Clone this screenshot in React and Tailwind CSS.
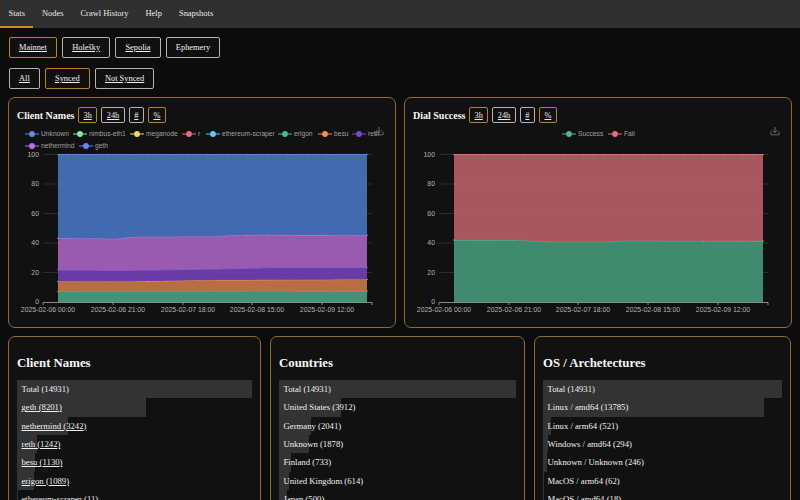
import React from 'react';

const Tab = ({ label, active }) => (
  <div className={`h-7 px-[8.5px] leading-[26px] text-[8.45px] text-[#e8e8e8] ${active ? 'border-b-2 border-[#c98a2c]' : ''}`}>
    {label}
  </div>
);

const Btn = ({ label, active, plain }) => (
  <div
    className={`h-[21px] px-[9px] leading-[19px] text-[8.4px] text-[#f2f2f2] rounded-[2px] border bg-[#101010] ${active ? 'border-[#b98233]' : 'border-[#b4b4b4]'} ${plain ? '' : 'underline'}`}
  >
    {label}
  </div>
);

const SmallBtn = ({ label, active }) => (
  <div
    className={`h-4 px-[4.5px] leading-[15px] text-[8.3px] text-[#ececec] underline rounded-[2px] border ${active ? 'border-[#b98233]' : 'border-[#b4b4b4]'}`}
  >
    {label}
  </div>
);

// piecewise linear lookup over [x, y] stops
const lerp = (stops, x) => {
  for (let i = 0; i < stops.length - 1; i++) {
    const [x0, y0] = stops[i];
    const [x1, y1] = stops[i + 1];
    if (x <= x1) return y0 + ((y1 - y0) * (x - x0)) / (x1 - x0);
  }
  return stops[stops.length - 1][1];
};

const Chart = ({ offsetX, plot, axis, ticks, labels, legend, bands, icon }) => {
  const xs = Array.from({ length: 32 }, (_, i) => plot[0] + ((plot[1] - plot[0]) * i) / 31);
  const ys = [
    ['100', 154.5],
    ['80', 184],
    ['60', 213.5],
    ['40', 243],
    ['20', 272.5],
    ['0', 302],
  ];
  return (
    <svg viewBox={`${offsetX} 125 386 195`} className="block mt-[2px] w-[386px] h-[195px]">
      {legend.map((l) => (
        <g key={l.text}>
          <line x1={l.x} x2={l.x + 14} y1={l.y} y2={l.y} stroke={l.color} strokeWidth="1" />
          <circle cx={l.x + 7} cy={l.y} r="2.9" fill={l.color} />
          <text x={l.x + 16} y={l.y + 2.4} fontSize="6.7" fill="#a0a0a0" fontFamily="Liberation Sans, sans-serif">
            {l.text}
          </text>
        </g>
      ))}
      {ys.map(([t, y]) => (
        <g key={t}>
          {t !== '0' && <line x1={axis[0]} x2={axis[1]} y1={y} y2={y} stroke="#333333" strokeWidth="0.8" />}
          <text x={axis[0] - 4} y={y + 2.4} textAnchor="end" fontSize="6.9" fill="#b4b4b4" fontFamily="Liberation Sans, sans-serif">
            {t}
          </text>
        </g>
      ))}
      {bands.map((b) => {
        const top = xs.map((x) => [x, lerp(b.top, x)]);
        const bottom = xs.map((x) => [x, lerp(b.bottom, x)]).reverse();
        return (
          <g key={b.name}>
            <polygon points={[...top, ...bottom].map((p) => p.join(',')).join(' ')} fill={b.fill} fillOpacity="0.96" />
            <polyline points={top.map((p) => p.join(',')).join(' ')} fill="none" stroke={b.line} strokeWidth="0.9" />
            {top.map(([x, y]) => (
              <circle key={x} cx={x} cy={y} r="0.8" fill={b.line} />
            ))}
          </g>
        );
      })}
      <line x1={axis[0]} x2={axis[1]} y1="302.5" y2="302.5" stroke="#a8a8a8" strokeWidth="0.8" />
      {ticks.map((x) => (
        <line key={x} x1={x} x2={x} y1="302.5" y2="305" stroke="#a8a8a8" strokeWidth="0.8" />
      ))}
      {labels.map(([x, t]) => (
        <text key={t} x={x} y="311.5" textAnchor="middle" fontSize="6.9" fill="#b4b4b4" fontFamily="Liberation Sans, sans-serif">
          {t}
        </text>
      ))}
      <path
        d={`M${icon + 4} 127v5.5m-2.6-2.4l2.6 2.6 2.6-2.6M${icon} 131.5v3.3h8v-3.3`}
        fill="none"
        stroke="#7e7e7e"
        strokeWidth="0.8"
      />
    </svg>
  );
};

const dateLabels = ['2025-02-06 00:00', '2025-02-06 21:00', '2025-02-07 18:00', '2025-02-08 15:00', '2025-02-09 12:00'];

const clientLegend = [
  { x: 25, y: 134, text: 'Unknown', color: '#5b8def' },
  { x: 73, y: 134, text: 'nimbus-eth1', color: '#7ef0a0' },
  { x: 130, y: 134, text: 'meganode', color: '#f5d565' },
  { x: 182, y: 134, text: 'r', color: '#e66b78' },
  { x: 206, y: 134, text: 'ethereum-scraper', color: '#62c8f5' },
  { x: 278, y: 134, text: 'erigon', color: '#4fb58f' },
  { x: 318, y: 134, text: 'besu', color: '#ef9150' },
  { x: 352, y: 134, text: 'reth', color: '#7c45d8' },
  { x: 25, y: 146, text: 'nethermind', color: '#bd6fe6' },
  { x: 79, y: 146, text: 'geth', color: '#5b8def' },
];

const clientBands = [
  {
    name: 'erigon',
    fill: '#44987c',
    line: '#55b893',
    top: [[58, 291.5], [367, 291]],
    bottom: [[58, 302], [367, 302]],
  },
  {
    name: 'besu',
    fill: '#bf7345',
    line: '#ee9a63',
    top: [[58, 281.5], [120, 281.5], [220, 280], [367, 279.5]],
    bottom: [[58, 291.5], [367, 291]],
  },
  {
    name: 'reth',
    fill: '#6c3eae',
    line: '#8a55e0',
    top: [[58, 270], [120, 270.5], [220, 269], [280, 267.5], [367, 267.5]],
    bottom: [[58, 281.5], [120, 281.5], [220, 280], [367, 279.5]],
  },
  {
    name: 'nethermind',
    fill: '#9e5fb6',
    line: '#c57ce8',
    top: [[58, 238.3], [118, 238.7], [135, 236.8], [218, 236.5], [228, 235.5], [255, 234.8], [367, 235.3]],
    bottom: [[58, 270], [120, 270.5], [220, 269], [280, 267.5], [367, 267.5]],
  },
  {
    name: 'geth',
    fill: '#456fb6',
    line: '#5b8def',
    top: [[58, 154.5], [367, 154.5]],
    bottom: [[58, 238.3], [118, 238.7], [135, 236.8], [218, 236.5], [228, 235.5], [255, 234.8], [367, 235.3]],
  },
];

const dialBands = [
  {
    name: 'success',
    fill: '#439175',
    line: '#64b897',
    top: [[454, 240], [515, 240], [550, 241.7], [612, 241.7], [622, 240.7], [763, 241]],
    bottom: [[454, 302], [763, 302]],
  },
  {
    name: 'fail',
    fill: '#b05b62',
    line: '#e56f78',
    top: [[454, 154.5], [763, 154.5]],
    bottom: [[454, 240], [515, 240], [550, 241.7], [612, 241.7], [622, 240.7], [763, 241]],
  },
];

const ChartCard = ({ title, children }) => (
  <div className="w-[388px] h-[231px] rounded-[7px] border border-[#8f6c33] bg-[#111111]">
    <div className="flex items-center h-4 mt-[9px] ml-2">
      <div className="font-bold text-[10px] text-[#f6f6f6] mr-[3.5px]">{title}</div>
      <div className="flex gap-1">
        <SmallBtn label="3h" active />
        <SmallBtn label="24h" />
        <SmallBtn label="#" />
        <SmallBtn label="%" active />
      </div>
    </div>
    {children}
  </div>
);

const StatCard = ({ title, total, rows, width, linked }) => (
  <div className={`h-[220px] px-2 rounded-[7px] border border-[#8f6c33] bg-[#111111] ${width}`}>
    <h2 className="mt-[18px] mb-[9px] h-4 leading-4 font-bold text-[12.8px] text-[#f8f8f8]">{title}</h2>
    {rows.map(([name, count]) => (
      <div key={name} className="relative h-[18.33px]">
        <div className="absolute inset-y-0 left-0 bg-[#333333]" style={{ width: `${(count / total) * 100}%` }} />
        <div className={`relative pl-[4.5px] leading-[18px] text-[8.7px] text-[#f0f0f0] ${linked && name !== 'Total' ? 'underline' : ''}`}>
          {name} ({count})
        </div>
      </div>
    ))}
  </div>
);

const clientRows = [
  ['Total', 14931],
  ['geth', 8201],
  ['nethermind', 3242],
  ['reth', 1242],
  ['besu', 1130],
  ['erigon', 1089],
  ['ethereum-scraper', 11],
];

const countryRows = [
  ['Total', 14931],
  ['United States', 3912],
  ['Germany', 2041],
  ['Unknown', 1878],
  ['Finland', 733],
  ['United Kingdom', 614],
  ['Japan', 500],
];

const osRows = [
  ['Total', 14931],
  ['Linux / amd64', 13785],
  ['Linux / arm64', 521],
  ['Windows / amd64', 294],
  ['Unknown / Unknown', 246],
  ['MacOS / arm64', 62],
  ['MacOS / amd64', 18],
];

export default function App() {
  return (
    <div className="w-[800px] h-[500px] overflow-hidden bg-[#0c0c0c] font-['Liberation_Serif',serif]">
      <div className="flex h-7 bg-[#303030]">
        <Tab label="Stats" active />
        <Tab label="Nodes" />
        <Tab label="Crawl History" />
        <Tab label="Help" />
        <Tab label="Snapshots" />
      </div>

      <div className="flex gap-[5.3px] mt-[9px] ml-[9px]">
        <Btn label="Mainnet" active />
        <Btn label="Holešky" />
        <Btn label="Sepolia" />
        <Btn label="Ephemery" plain />
      </div>
      <div className="flex gap-[5.3px] mt-[10px] ml-[9px]">
        <Btn label="All" />
        <Btn label="Synced" active />
        <Btn label="Not Synced" />
      </div>

      <div className="flex gap-2 mt-2 ml-2">
        <ChartCard title="Client Names">
          <Chart
            offsetX={9}
            plot={[58, 367]}
            axis={[43, 372]}
            ticks={[43, 113, 183, 252, 322, 372]}
            labels={[48, 118, 188, 257, 327].map((x, i) => [x, dateLabels[i]])}
            legend={clientLegend}
            bands={clientBands}
            icon={375}
          />
        </ChartCard>
        <ChartCard title="Dial Success">
          <Chart
            offsetX={405}
            plot={[454, 763]}
            axis={[439, 768]}
            ticks={[439, 509, 578, 648, 718, 768]}
            labels={[444, 514, 583, 653, 723].map((x, i) => [x, dateLabels[i]])}
            legend={[
              { x: 562, y: 134, text: 'Success', color: '#4fb58f' },
              { x: 608, y: 134, text: 'Fail', color: '#e66b78' },
            ]}
            bands={dialBands}
            icon={771}
          />
        </ChartCard>
      </div>

      <div className="flex gap-[9px] mt-[8px] ml-2">
        <StatCard title="Client Names" total={14931} rows={clientRows} width="w-[253px]" linked />
        <StatCard title="Countries" total={14931} rows={countryRows} width="w-[255px]" />
        <StatCard title="OS / Archetectures" total={14931} rows={osRows} width="w-[257px]" />
      </div>
    </div>
  );
}
